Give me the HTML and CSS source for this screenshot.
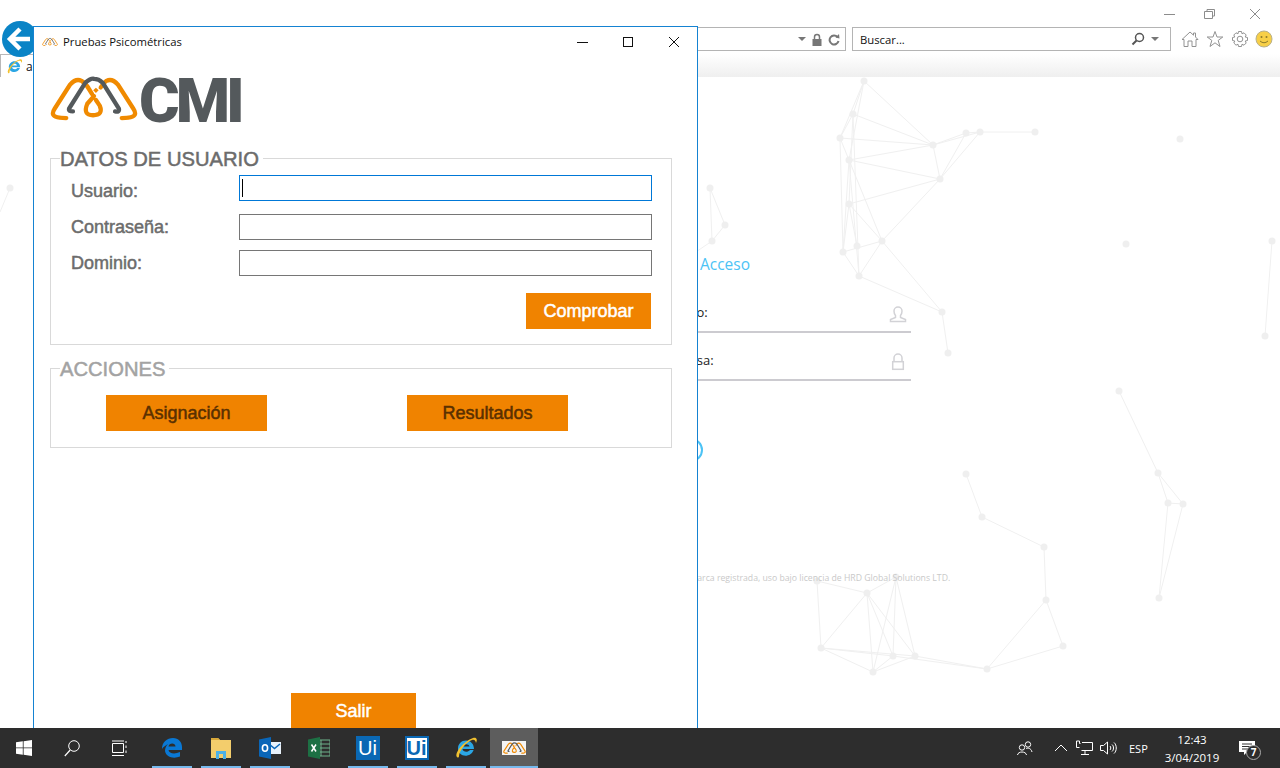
FILE: index.html
```html
<!DOCTYPE html>
<html>
	<head>
		<meta charset="utf-8" />
		<title>Pruebas Psicométricas</title>
		<link rel="stylesheet" href="styles.css">
	</head>
	<body>
		<svg class="defs" width="0" height="0">
			<symbol id="cmi-mark" viewBox="4 6 92 47">
				<path d="M21 50Q7 50 7 45Q7 43 9 40L25 15Q31 8 37 11Q42 14 45 20L48 25" fill="none" stroke="#f08a00" stroke-width="4.500" stroke-linecap="round"/>
				<path d="M79 50Q93 50 93 45Q93 43 91 40L75 15Q69 8 63 11Q60 13 57 18" fill="none" stroke="#f08a00" stroke-width="4.500" stroke-linecap="round"/>
				<path d="M28 43Q23 43 24 40L41 13Q47 8 50 9Q55 9 59 13L76 40Q77 44 72 43" fill="none" stroke="#54595c" stroke-width="4.500" stroke-linecap="round"/>
				<path d="M50 27L43 35Q38 47 49 47Q60 47 56 37L52 31" fill="none" stroke="#f08a00" stroke-width="4.500" stroke-linecap="round"/>
				<rect x="50" y="19" width="4" height="4" transform="rotate(45 52 21)" fill="#f08a00"/>
			</symbol>
			<symbol id="ie-mark" viewBox="0 0 24 24">
				<path d="M4 12.500C4 8 7.500 4.500 12 4.500S20 8 20 13H8.500C9 16 13.500 17 16 14H19.600C17.500 20 10 21.500 6 17.500C4.800 16.200 4 14.500 4 12.500ZM8.500 10.500H15.500C15 7.500 9.500 7.500 8.500 10.500Z" fill="#2ba6e4"/>
				<path d="M3 21C0 17 10 5 19 2C23 1 23.500 4 22 7C21.500 4 20 3.500 18 4C12 6 5 15 5 20C5 21.500 4 22 3 21Z" fill="#f2c230"/>
			</symbol>
		</svg>

		<div class="desktop">
			<svg class="network" width="1280" height="728" viewBox="0 0 1280 728">
				<g stroke="#f0f0f0" fill="none">
					<path d="M864 81L840 138M864 81L853 114M864 81L849 160M864 81L933 145M853 114L840 138M853 114L933 145M853 114L849 204M853 114L859 276M840 138L933 145M840 138L849 160M840 138L843 252M849 160L933 145M849 160L940 179M849 160L843 252M849 160L859 276M849 160L882 241M849 204L940 179M849 204L882 241M849 204L843 252M849 204L857 246M843 252L882 241M843 252L859 276M882 241L859 276M882 241L940 179M882 241L942 312M859 276L942 312M933 145L940 179M933 145L966 133M933 145L980 132M940 179L966 133M940 179L980 132M966 133L980 132L1035 132M942 312L948 353"/>
					<path d="M1119 391L1158 473L1168 503L1159 598L1183 504L1158 473M1168 503L1183 504"/>
					<path d="M966 474L982 517L1044 547L1046 600L1063 646L987 669L1046 600"/>
					<path d="M817 581L867 593L896 577L873 672L821 648L867 593L873 672M817 581L821 648L893 656L987 669L915 656L821 648M867 593L893 656L896 577L915 656L867 593M873 672L893 656M873 672L915 656"/>
					<path d="M10 188L0 212M710 188L725 225L712 241L710 188M712 241L690 256M1272 241L1265 336"/>
				</g>
				<g fill="#efefef">
					<circle cx="864" cy="81" r="3.500"/><circle cx="853" cy="114" r="3.500"/><circle cx="840" cy="138" r="3.500"/><circle cx="849" cy="160" r="3.500"/>
					<circle cx="849" cy="204" r="3.500"/><circle cx="843" cy="252" r="3.500"/><circle cx="857" cy="246" r="3.500"/><circle cx="882" cy="241" r="3.500"/>
					<circle cx="859" cy="276" r="3.500"/><circle cx="933" cy="145" r="3.500"/><circle cx="940" cy="179" r="3.500"/><circle cx="966" cy="133" r="3.500"/>
					<circle cx="980" cy="132" r="3.500"/><circle cx="1035" cy="132" r="3.500"/><circle cx="942" cy="312" r="3.500"/><circle cx="948" cy="353" r="3.500"/>
					<circle cx="1119" cy="391" r="3.500"/><circle cx="1158" cy="473" r="3.500"/><circle cx="1168" cy="503" r="3.500"/><circle cx="1183" cy="504" r="3.500"/><circle cx="1159" cy="598" r="3.500"/>
					<circle cx="966" cy="474" r="3.500"/><circle cx="982" cy="517" r="3.500"/><circle cx="1044" cy="547" r="3.500"/><circle cx="1046" cy="600" r="3.500"/><circle cx="1063" cy="646" r="3.500"/><circle cx="987" cy="669" r="3.500"/>
					<circle cx="817" cy="581" r="3.500"/><circle cx="867" cy="593" r="3.500"/><circle cx="896" cy="577" r="3.500"/><circle cx="821" cy="648" r="3.500"/><circle cx="873" cy="672" r="3.500"/><circle cx="893" cy="656" r="3.500"/><circle cx="915" cy="656" r="3.500"/>
					<circle cx="10" cy="188" r="3.500"/><circle cx="710" cy="188" r="3.500"/><circle cx="725" cy="225" r="3.500"/><circle cx="712" cy="241" r="3.500"/>
					<circle cx="1126" cy="244" r="3.500"/><circle cx="1180" cy="139" r="3.500"/><circle cx="1272" cy="241" r="3.500"/><circle cx="1265" cy="336" r="3.500"/>
				</g>
			</svg>

			<div class="browser">
				<div class="browser-caption">
					<svg width="20" height="12" viewBox="0 0 20 12"><path d="M0 6.500H11" stroke="#8c8c8c"/></svg>
					<svg width="46" height="12" viewBox="0 0 46 12"><path d="M20.500 3.500H28.500V10.500H20.500ZM23 3.500V1.500H30.500V8H28.500" fill="none" stroke="#8c8c8c"/></svg>
					<svg width="46" height="12" viewBox="0 0 46 12"><path d="M20 1L30 11M30 1L20 11" stroke="#8c8c8c"/></svg>
				</div>
				<div class="browser-toolbar">
					<div class="address-box">
						<span class="drop-arrow"></span>
						<svg width="12" height="13" viewBox="0 0 12 13"><path d="M3.500 6V4A2.500 2.500 0 0 1 8.500 4V6" fill="none" stroke="#777" stroke-width="1.500"/><rect x="1.500" y="6" width="9" height="7" fill="#777"/></svg>
						<svg width="12" height="13" viewBox="0 0 12 13"><path d="M9.500 4A4.500 4.500 0 1 0 10.500 8" fill="none" stroke="#777" stroke-width="2"/><path d="M7.500 4.500L11.500 5.500L11 1Z" fill="#777"/></svg>
					</div>
					<div class="search-box">
						<span class="search-text">Buscar...</span>
						<svg width="14" height="14" viewBox="0 0 14 14"><circle cx="8.500" cy="5.500" r="4" fill="none" stroke="#555" stroke-width="1.500"/><path d="M5.500 8.500L1.500 12.500" stroke="#555" stroke-width="2"/></svg>
						<span class="drop-arrow"></span>
					</div>
					<div class="tool-icons">
						<svg width="18" height="18" viewBox="0 0 18 18"><path d="M1 9.500L9 2L12.500 5.200V3H14.500V7L17 9.500L15 9.500V16.500H11V11H7V16.500H3V9.500Z" fill="#fff" stroke="#929292"/></svg>
						<svg width="18" height="18" viewBox="0 0 18 18"><path d="M9 1.500L11 7H16.800L12.200 10.400L14 16.500L9 12.800L4 16.500L5.800 10.400L1.200 7H7Z" fill="#fff" stroke="#929292"/></svg>
						<svg width="18" height="18" viewBox="0 0 18 18"><circle cx="9" cy="9" r="2.800" fill="none" stroke="#929292"/><path d="M7.500 1.500H10.500L11 3.800L13 2.800L15.200 5L14.200 7L16.500 7.500V10.500L14.200 11L15.200 13L13 15.200L11 14.200L10.500 16.500H7.500L7 14.200L5 15.200L2.800 13L3.800 11L1.500 10.500V7.500L3.800 7L2.800 5L5 2.800L7 3.800Z" fill="none" stroke="#929292"/></svg>
						<svg class="smiley" width="18" height="18" viewBox="0 0 18 18"><circle cx="9" cy="9" r="8" fill="#f7cf47" stroke="#b9b08a"/><circle cx="6.500" cy="7" r="1" fill="#8c7a2b"/><circle cx="11.500" cy="7" r="1" fill="#8c7a2b"/><path d="M5 11Q9 14.500 13 11" fill="none" stroke="#8c7a2b"/></svg>
					</div>
				</div>
				<div class="browser-tabs">
					<div class="tab">
						<svg width="17" height="17"><use href="#ie-mark"/></svg>
						<span class="tab-title">a</span>
					</div>
				</div>

				<div class="login">
					<div class="login-title">Iniciar Acceso</div>
					<div class="login-row">
						<span class="login-label label-user">Usuario:</span>
						<svg width="18" height="18" viewBox="0 0 18 18"><path d="M1.500 16.500V14.500L6.500 12.500V10.500C5 9 5 7 5 6A4 4 0 0 1 13 6C13 7 13 9 11.500 10.500V12.500L16.500 14.500V16.500Z" fill="none" stroke="#d2d2d6" stroke-width="1.500"/></svg>
					</div>
					<div class="login-row">
						<span class="login-label label-company">Empresa:</span>
						<svg width="18" height="18" viewBox="0 0 18 18"><path d="M5 8V5A4 4 0 0 1 13 5V8" fill="none" stroke="#d2d2d6" stroke-width="1.500"/><rect x="3.700" y="8.700" width="10.600" height="7.600" fill="none" stroke="#d2d2d6" stroke-width="1.500"/></svg>
					</div>
					<div class="login-go"></div>
					<div class="login-legal">CMI es marca registrada, uso bajo licencia de HRD Global Solutions LTD.</div>
				</div>
			</div>

			<svg class="back-button" width="38" height="38" viewBox="0 0 38 38">
				<circle cx="19" cy="19" r="18" fill="#0a84c6"/>
				<path d="M9 19H29M19 9L9 19L19 29" fill="none" stroke="#fff" stroke-width="4.500"/>
			</svg>

			<div class="window">
				<div class="window-title">
					<svg class="window-icon" width="16" height="10"><use href="#cmi-mark"/></svg>
					<span class="window-name">Pruebas Psicométricas</span>
					<div class="window-controls">
						<svg width="46" height="12" viewBox="0 0 46 12"><path d="M18 6.500H29" stroke="#111"/></svg>
						<svg width="46" height="12" viewBox="0 0 46 12"><rect x="18.500" y="1.500" width="9" height="9" fill="none" stroke="#111"/></svg>
						<svg width="46" height="12" viewBox="0 0 46 12"><path d="M18 1L28 11M28 1L18 11" stroke="#111"/></svg>
					</div>
				</div>
				<div class="logo">
					<svg class="logo-mark" width="88" height="49"><use href="#cmi-mark"/></svg>
					<span class="logo-text">CMI</span>
				</div>

				<fieldset class="group">
					<legend class="group-title">DATOS DE USUARIO</legend>
					<div class="field field-first">
						<label class="field-label">Usuario:</label>
						<div class="input-wrap">
							<input class="input input-active" type="text">
							<span class="caret"></span>
						</div>
					</div>
					<div class="field">
						<label class="field-label">Contraseña:</label>
						<div class="input-wrap"><input class="input" type="password"></div>
					</div>
					<div class="field">
						<label class="field-label">Dominio:</label>
						<div class="input-wrap"><input class="input" type="text"></div>
					</div>
					<div class="group-foot">
						<button class="btn btn-white">Comprobar</button>
					</div>
				</fieldset>

				<fieldset class="group group-off">
					<legend class="group-title">ACCIONES</legend>
					<div class="actions">
						<button class="btn btn-dim">Asignación</button>
						<button class="btn btn-dim">Resultados</button>
					</div>
				</fieldset>

				<div class="window-foot">
					<button class="btn btn-white">Salir</button>
				</div>
			</div>
		</div>

		<div class="taskbar">
			<div class="task-slot">
				<svg width="16" height="16" viewBox="0 0 16 16"><path d="M0 2.300L6.800 1.300V7.500H0ZM7.600 1.200L16 0V7.500H7.600ZM0 8.300H6.800V14.700L0 13.700ZM7.600 8.300H16V16L7.600 14.800Z" fill="#fff"/></svg>
			</div>
			<div class="task-slot">
				<svg width="16" height="17" viewBox="0 0 16 17"><circle cx="10" cy="6" r="5.300" fill="none" stroke="#fff"/><path d="M6.200 10L0.800 16" stroke="#fff" stroke-width="1.200"/></svg>
			</div>
			<div class="task-slot">
				<svg width="16" height="17" viewBox="0 0 16 17"><path d="M.5 3.500H11.500V12.500H.5ZM0 1H12M0 15.500H12M14 1V3M14 5.500V8M14 10.500V13" fill="none" stroke="#fff"/></svg>
			</div>
			<div class="task-slot app-first app-open">
				<svg width="20" height="20" viewBox="0 0 20 20"><path d="M0 11C0 4 5 0 11 0C16.500 0 20 4 20 9V12H6.500C7 15.500 12.500 16.500 18 14V18.500C12 21 4 19.500 3 13C3 10 4 8 6 6C4 7 1 9 0 11ZM6.500 8.500H13.500C13.500 4.500 7 4.500 6.500 8.500Z" fill="#0a78d4"/></svg>
			</div>
			<div class="task-slot app-open">
				<svg width="22" height="23" viewBox="0 0 22 23"><path d="M1 1H8L10 3H21V21H1Z" fill="#f3cd6c"/><path d="M1 1H8L10 3H1Z" fill="#d8a83a"/><path d="M6 22V14H16V22H13V17H9V22Z" fill="#4db1e6"/></svg>
			</div>
			<div class="task-slot app-open">
				<svg width="22" height="22" viewBox="0 0 22 22"><rect x="9" y="5" width="13" height="12" fill="#e8f1fa"/><path d="M10 7L15.500 11.500L21 7" fill="none" stroke="#0a66b8" stroke-width="1.500"/><path d="M0 2.500L12 0V22L0 19.500Z" fill="#0a66b8"/><ellipse cx="6" cy="11" rx="2.600" ry="3.300" fill="none" stroke="#fff" stroke-width="1.600"/></svg>
			</div>
			<div class="task-slot">
				<svg width="22" height="22" viewBox="0 0 22 22"><rect x="10" y="3" width="12" height="16" fill="none" stroke="#6fb38c"/><path d="M13 3V19M10 7H22M10 11H22M10 15H22" stroke="#6fb38c"/><path d="M0 2.500L12 0V22L0 19.500Z" fill="#1d7044"/><path d="M3.500 7.500L8 14.500M8 7.500L3.500 14.500" stroke="#fff" stroke-width="1.500"/></svg>
			</div>
			<div class="task-slot app-open"><span class="ui-badge">Ui</span></div>
			<div class="task-slot app-open"><span class="ui-badge ui-badge-light">Ui</span></div>
			<div class="task-slot app-open">
				<svg width="24" height="24"><use href="#ie-mark"/></svg>
			</div>
			<div class="task-slot app-open app-active">
				<div class="app-tile"><svg width="23" height="12"><use href="#cmi-mark"/></svg></div>
			</div>

			<div class="tray">
				<svg class="tray-people" width="16" height="16" viewBox="0 0 16 16"><circle cx="11" cy="4.500" r="2.700" fill="none" stroke="#fff"/><circle cx="5" cy="7.500" r="2.700" fill="none" stroke="#fff"/><path d="M.5 15C1 11 9 11 9.500 15M9 8.500C11 7.800 14 8 15 12" fill="none" stroke="#fff"/></svg>
				<svg class="tray-chevron" width="14" height="8" viewBox="0 0 14 8"><path d="M1 7L7 1L13 7" fill="none" stroke="#fff"/></svg>
				<svg class="tray-net" width="17" height="16" viewBox="0 0 17 16"><path d="M3.500 1H.5V7.500H3.500M3.500 1V3.500H4.500M6 2.500H16.500V10.500H5.500M9 10.500V14M5 14.500H13" fill="none" stroke="#fff"/></svg>
				<svg class="tray-volume" width="18" height="14" viewBox="0 0 18 14"><path d="M.5 4.500H3.500L7.500 1V13L3.500 9.500H.5ZM10 5C11 6 11 8 10 9M12 3.500C14 5 14 9 12 10.500M14 1.500C17 4 17 10 14 12.500" fill="none" stroke="#fff"/></svg>
				<span class="tray-lang">ESP</span>
				<div class="tray-clock">
					<span>12:43</span>
					<span>3/04/2019</span>
				</div>
				<div class="tray-notify">
					<svg width="16" height="14" viewBox="0 0 16 14"><path d="M0 0H16V11H8L5 14V11H0Z" fill="#fff"/><path d="M3 3H13M3 5.500H13M3 8H10" stroke="#333"/></svg>
					<span class="notify-count">7</span>
				</div>
			</div>
		</div>
	</body>
</html>
```

FILE: styles.css
```css
html,body{
	margin:0;
	padding:0;
	width:1280px;
	height:768px;
	overflow:hidden;
	background:#fff;
}
.defs{
	display:block;
	height:0;
}
.desktop{
	position:relative;
	height:728px;
	overflow:hidden;
	background:#fff;
}
.network{
	position:absolute;
	left:0;
	top:0;
}

/* ventana del navegador de fondo */
.browser{
	position:relative;
	font-family:"Open Sans",sans-serif;
}
.browser-caption{
	height:27px;
	display:flex;
	align-items:center;
	justify-content:flex-end;
	padding-right:4px;
	box-sizing:border-box;
}
.browser-toolbar{
	height:27px;
	display:flex;
	gap:6px;
	box-sizing:border-box;
	padding-left:40px;
	padding-bottom:3px;
}
.address-box,.search-box{
	height:24px;
	box-sizing:border-box;
	border:1px solid #b4b4b4;
	background:#fff;
	display:flex;
	align-items:center;
}
.address-box{
	flex:1;
	justify-content:flex-end;
	gap:5px;
	padding-right:5px;
}
.search-box{
	width:319px;
	padding:0 11px 0 7px;
	gap:6px;
}
.search-text{
	flex:1;
	font-size:11.300px;
	color:#111;
}
.drop-arrow{
	width:0;
	height:0;
	border-left:4px solid transparent;
	border-right:4px solid transparent;
	border-top:4px solid #777;
}
.tool-icons{
	width:103px;
	display:flex;
	align-items:center;
	gap:7px;
	padding-left:4px;
	box-sizing:border-box;
}
.smiley{
	margin-left:-1px;
}
.browser-tabs{
	height:23px;
	background:linear-gradient(#fff,#efefef);
}
.tab{
	width:33px;
	height:23px;
	box-sizing:border-box;
	border-top:1px solid #b8b8b8;
	border-left:1px solid #b8b8b8;
	background:#fff;
	display:flex;
	align-items:center;
	gap:3px;
	padding-left:5px;
}
.tab-title{
	font-size:12px;
	color:#111;
}
.back-button{
	position:absolute;
	left:1px;
	top:20px;
}

/* pagina de acceso, casi tapada por la ventana */
.login{
	width:271px;
	margin-left:640px;
}
.login-title{
	margin-top:176px;
	margin-bottom:10px;
	height:22px;
	line-height:22px;
	font-size:15.500px;
	color:#4cc3f5;
	text-align:right;
	width:110px;
}
.login-row{
	height:48px;
	box-sizing:border-box;
	border-bottom:2px solid #cccbd0;
	display:flex;
	align-items:center;
	justify-content:space-between;
	font-size:13px;
	color:#222;
	padding-right:4px;
	padding-top:12px;
}
.login-label{
	margin-bottom:5px;
}
.label-user{
	margin-left:17px;
}
.label-company{
	margin-left:17px;
}
.login-go{
	width:59px;
	height:20px;
	margin-top:57px;
	border:2px solid #4cc3f5;
	border-radius:12px;
}
.login-legal{
	margin:110px 0 0 20px;
	width:400px;
	font-size:8.700px;
	color:#c9c9c9;
}

/* ventana de la aplicacion */
.window{
	position:absolute;
	left:33px;
	top:26px;
	width:665px;
	height:720px;
	box-sizing:border-box;
	border:1px solid #1583d2;
	background:#fff;
	font-family:"Liberation Sans",Arial,sans-serif;
}
.window-title{
	height:29px;
	display:flex;
	align-items:center;
	padding-left:8px;
}
.window-icon{
	margin-right:5px;
}
.window-name{
	flex:1;
	font-family:"Open Sans",sans-serif;
	font-size:11.300px;
	color:#111;
}
.window-controls{
	display:flex;
}
.logo{
	height:49px;
	display:flex;
	align-items:center;
	padding:18px 0 0 16px;
	margin-bottom:24px;
	gap:1px;
}
.logo-mark{
	display:block;
}
.logo-text{
	font-family:"Roboto",sans-serif;
	font-weight:900;
	font-size:62px;
	line-height:49px;
	letter-spacing:-4px;
	color:#54595c;
	margin-top:4px;
}
.group{
	margin:0 25px 12px 16px;
	padding:0 19px 15px 20px;
	border:1px solid #d9d9d9;
	min-width:0;
}
.group-title{
	margin-left:-11px;
	padding:0 4px 0 0;
	height:23px;
	line-height:25px;
	font-size:20.200px;
	-webkit-text-stroke:0.5px #6c6c6c;
	color:#6c6c6c;
}
.group-off .group-title{
	color:#a3a3a3;
	-webkit-text-stroke:0.5px #a3a3a3;
}
.field{
	display:flex;
	align-items:center;
	margin-top:10px;
}
.field-first{
	margin-top:5px;
	margin-bottom:13px;
}
.field-first + .field{
	margin-top:0;
}
.field-first .field-label{
	height:26px;
	line-height:33px;
}
.field-label{
	flex:none;
	width:168px;
	font-size:18px;
	-webkit-text-stroke:0.5px #6c6c6c;
	color:#6c6c6c;
}
.input-wrap{
	position:relative;
}
.input{
	display:block;
	width:413px;
	height:26px;
	box-sizing:border-box;
	border:1px solid #767676;
	border-radius:0;
	padding:0 3px;
	outline:none;
	background:#fff;
}
.input-active{
	border-color:#0078d7;
}
.caret{
	position:absolute;
	left:3px;
	top:4px;
	width:1px;
	height:18px;
	background:#000;
}
.group-foot{
	display:flex;
	justify-content:flex-end;
	margin-top:17px;
	padding-right:1px;
}
.btn{
	width:125px;
	height:36px;
	border:none;
	background:#f08300;
	font-family:"Liberation Sans",Arial,sans-serif;
	font-size:18px;
	-webkit-text-stroke:0.5px currentColor;
	padding:0;
}
.btn-white{
	color:#fff;
}
.btn-dim{
	width:161px;
	color:#5a3000;
}
.actions{
	display:flex;
	gap:140px;
	padding-left:35px;
	margin-top:15px;
	padding-bottom:1px;
}
.window-foot{
	padding-left:257px;
	margin-top:245px;
}

/* barra de tareas */
.taskbar{
	height:40px;
	background:#2d2d2d;
	display:flex;
	font-family:"Open Sans",sans-serif;
	color:#fff;
	position:relative;
}
.task-slot{
	width:48px;
	height:40px;
	display:flex;
	align-items:center;
	justify-content:center;
	position:relative;
}
.app-first{
	margin-left:3px;
}
.app-first,.app-first ~ .task-slot{
	width:49px;
}
.task-slot.app-open::after{
	content:"";
	position:absolute;
	left:5px;
	right:4px;
	bottom:0;
	height:2px;
	background:#76b9ed;
}
.task-slot.app-active{
	width:48px;
	background:#5d5d5d;
}
.task-slot.app-active::after{
	left:0;
	right:0;
}
.ui-badge{
	width:24px;
	height:24px;
	box-sizing:border-box;
	background:#0a68b4;
	color:#fff;
	font-family:"Liberation Sans",sans-serif;
	font-size:20px;
	line-height:24px;
	text-align:center;
}
.ui-badge-light{
	background:#fff;
	color:#0a68b4;
	border:2px solid #0a68b4;
	font-weight:700;
	line-height:20px;
}
.app-tile{
	width:24px;
	height:14px;
	background:#f4f4f4;
	display:flex;
	align-items:center;
	justify-content:center;
}
.tray{
	margin-left:auto;
	display:flex;
	align-items:center;
	font-size:11.500px;
	padding-right:25px;
}
.tray-people{
	margin-right:21px;
}
.tray-chevron{
	margin-right:8px;
}
.tray-net{
	margin-right:7px;
}
.tray-volume{
	margin-right:11px;
}
.tray-lang{
	width:25px;
	font-size:11px;
}
.tray-clock{
	width:76px;
	display:flex;
	flex-direction:column;
	align-items:center;
	gap:1px;
	line-height:17px;
}
.tray-notify{
	position:relative;
	margin-left:9px;
	width:16px;
	height:14px;
}
.tray-notify svg{
	display:block;
}
.notify-count{
	position:absolute;
	left:7px;
	top:4px;
	width:15px;
	height:15px;
	box-sizing:border-box;
	border:1px solid #aaa;
	border-radius:50%;
	background:#2d2d2d;
	font-size:10px;
	font-weight:700;
	line-height:13px;
	text-align:center;
}
```
